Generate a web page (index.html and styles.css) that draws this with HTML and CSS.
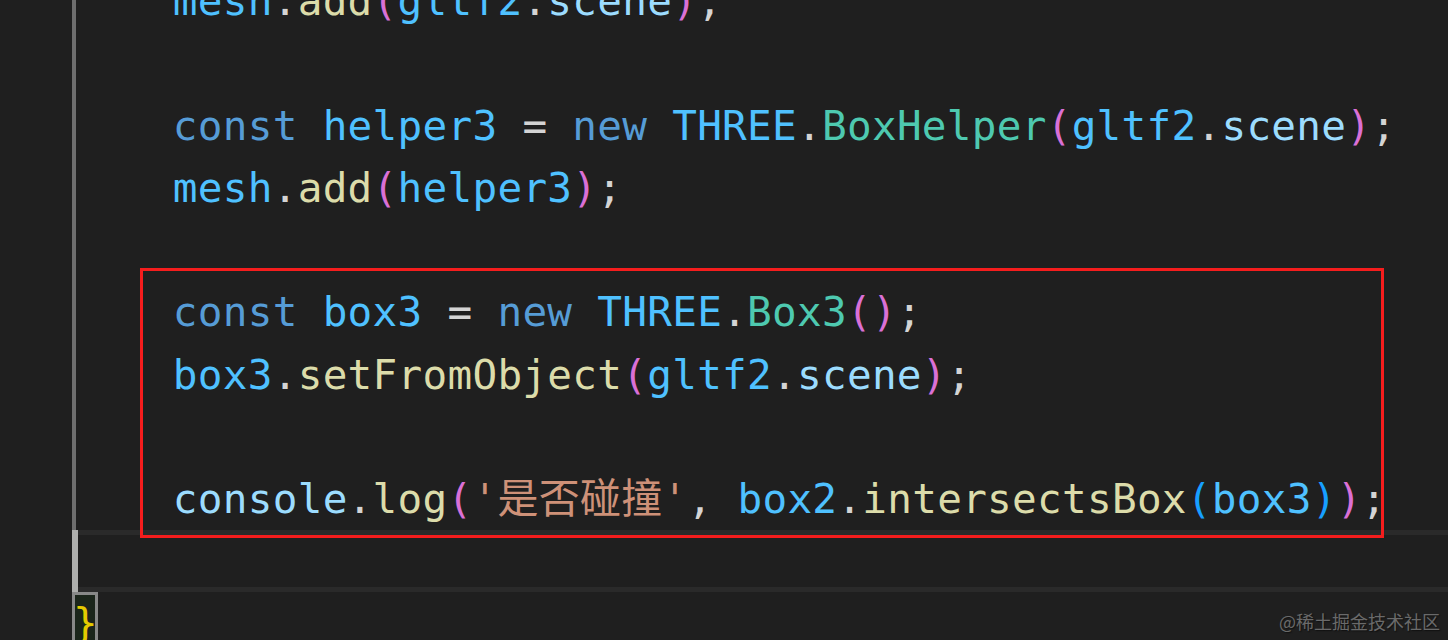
FILE: index.html
```html
<!DOCTYPE html>
<html>
<head>
<meta charset="utf-8">
<link rel="stylesheet" href="styles.css">
</head>
<body>
<div class="editor">
  <div class="gutter"></div>
  <div class="code">
    <div class="block">
      <div class="line">    <span class="v">mesh</span><span class="p">.</span><span class="f">add</span><span class="b1">(</span><span class="v">gltf2</span><span class="p">.</span><span class="pr">scene</span><span class="b1">)</span><span class="p">;</span></div>
      <div class="line"> </div>
      <div class="line">    <span class="k">const</span> <span class="v">helper3</span> <span class="p">=</span> <span class="k">new</span> <span class="v">THREE</span><span class="p">.</span><span class="c">BoxHelper</span><span class="b1">(</span><span class="v">gltf2</span><span class="p">.</span><span class="pr">scene</span><span class="b1">)</span><span class="p">;</span></div>
      <div class="line">    <span class="v">mesh</span><span class="p">.</span><span class="f">add</span><span class="b1">(</span><span class="v">helper3</span><span class="b1">)</span><span class="p">;</span></div>
      <div class="line"> </div>
      <div class="line">    <span class="k">const</span> <span class="v">box3</span> <span class="p">=</span> <span class="k">new</span> <span class="v">THREE</span><span class="p">.</span><span class="c">Box3</span><span class="b1">()</span><span class="p">;</span></div>
      <div class="line">    <span class="v">box3</span><span class="p">.</span><span class="f">setFromObject</span><span class="b1">(</span><span class="v">gltf2</span><span class="p">.</span><span class="pr">scene</span><span class="b1">)</span><span class="p">;</span></div>
      <div class="line"> </div>
      <div class="line">    <span class="pr">console</span><span class="p">.</span><span class="f">log</span><span class="b1">(</span><span class="s">'是否碰撞'</span><span class="p">,</span> <span class="v">box2</span><span class="p">.</span><span class="f">intersectsBox</span><span class="b2">(</span><span class="v">box3</span><span class="b2">)</span><span class="b1">)</span><span class="p">;</span></div>
    </div>
    <div class="line current"><span class="cursor"></span><span class="hl"></span></div>
    <div class="line"><span class="match"><span class="b0">}</span></span></div>
  </div>
  <div class="annot"></div>
  <div class="watermark">@稀土掘金技术社区</div>
</div>
</body>
</html>
```
FILE: styles.css
```css
html, body {
  margin: 0;
  padding: 0;
  background: #1f1f1f;
}
.editor {
  position: relative;
  width: 1448px;
  height: 640px;
  overflow: hidden;
  display: flex;
  background: #1f1f1f;
}
.gutter {
  width: 72px;
  flex: none;
}
.code {
  flex: 1;
  margin-top: -29.6px;
  font-family: "DejaVu Sans Mono", "Noto Sans CJK SC", monospace;
  font-size: 41px;
  line-height: 62.2px;
  letter-spacing: 0.28px;
  color: #d4d4d4;
}
.block {
  box-shadow: inset 4px 0 0 #6e6e6e;
}
.line {
  height: 62.2px;
  white-space: pre;
  padding-left: 1px;
}
.current {
  display: flex;
  padding-left: 0;
}
.cursor {
  width: 6px;
  flex: none;
  background: #aeafad;
}
.hl {
  flex: 1;
  box-sizing: border-box;
  border-top: 5px solid #2a2a2a;
  border-bottom: 5px solid #2a2a2a;
}
.match {
  display: inline-block;
  position: relative;
  height: 62.2px;
  vertical-align: top;
  margin-left: -1px;
  padding-left: 1px;
}
.match::after {
  content: "";
  position: absolute;
  left: 0;
  top: 0;
  right: 0;
  bottom: 0;
  box-sizing: border-box;
  border: 3px solid #888888;
  background: rgba(0, 100, 0, 0.1);
}
.k { color: #569cd6; }
.v { color: #4fc1ff; }
.pr { color: #9cdcfe; }
.f { color: #dcdcaa; }
.c { color: #4ec9b0; }
.s { color: #ce9178; }
.p { color: #d4d4d4; }
.b0 { color: #ffd700; }
.b1 { color: #da70d6; }
.b2 { color: #179fff; }
.annot {
  position: absolute;
  left: 140px;
  top: 268px;
  width: 1244px;
  height: 270px;
  box-sizing: border-box;
  border: 3.5px solid #f51d1d;
}
.watermark {
  position: absolute;
  right: 8px;
  bottom: 7px;
  font-family: "Noto Sans CJK SC", sans-serif;
  font-size: 18px;
  line-height: 24px;
  color: #6a6a6a;
  text-shadow: 1px 1px 1px #111111;
}
```
